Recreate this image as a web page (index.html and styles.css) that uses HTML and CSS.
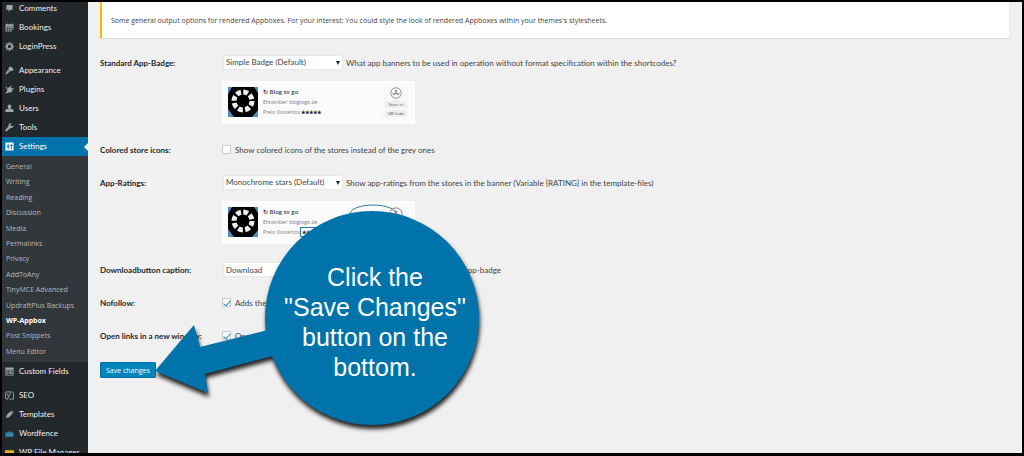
FILE: index.html
```html
<!DOCTYPE html>
<html lang="en">
    <head>
        <meta charset="UTF-8" />
        <meta name="viewport" content="width=device-width, initial-scale=1.0" />
        <title>WP-Appbox Settings</title>
        <link rel="stylesheet" href="styles.css">
    </head>
    <body>
        <div class="frame">
            <nav class="sidebar">
                <ul class="menu">
                    <li><a href="#"><svg class="icon" viewBox="0 0 20 20"><path d="M3 2h14v11h-5l-4 5v-5H3z"/></svg>Comments</a></li>
                    <li><a href="#"><svg class="icon" viewBox="0 0 20 20"><path d="M1 3h4V1h2v2h6V1h2v2h4v4H1zM1 8h4v3H1zM6 8h4v3H6zM11 8h4v3h-4zM16 8h3v3h-3zM1 12h4v3H1zM6 12h4v3H6zM11 12h4v3h-4zM16 12h3v3h-3zM1 16h4v3H1zM6 16h4v3H6zM11 16h4v3h-4z"/></svg>Bookings</a></li>
                    <li><a href="#"><svg class="icon" viewBox="0 0 20 20"><circle cx="10" cy="10" r="5.500" fill="none" stroke="currentColor" stroke-width="3.500"/><path d="M8.500 0h3v4h-3zM8.500 16h3v4h-3zM0 8.500h4v3H0zM16 8.500h4v3h-4zM2 4l2-2 3 3-2 2zM13 15l2-2 3 3-2 2zM16 2l2 2-3 3-2-2zM5 13l2 2-3 3-2-2z"/></svg>LoginPress</a></li>
                    <li class="group"><a href="#"><svg class="icon" viewBox="0 0 20 20"><path d="M9 3l4-2 6 6-2 4-3-1-3 3-4-4zM6 9l4 4-7 6-2-2z"/></svg>Appearance</a></li>
                    <li><a href="#"><svg class="icon" viewBox="0 0 20 20"><path d="M11 4l3-3 1 1-2 4 2 2 4-2 1 1-4 4c1 4-3 7-7 5l-5 3-3-1 4-5c-2-4 1-9 6-8zM1 5l4-1-2 5z"/></svg>Plugins</a></li>
                    <li><a href="#"><svg class="icon" viewBox="0 0 20 20"><path d="M6 5q0-4 4-4t4 4-2 6h5l2 3v4H1v-4l2-3h5Q6 9 6 5z"/></svg>Users</a></li>
                    <li><a href="#"><svg class="icon" viewBox="0 0 20 20"><path d="M18 5l-4 2-2-2 2-4c-4-1-7 2-6 6l-7 8c-1 3 2 5 4 3l7-7c5 1 8-3 6-6z"/></svg>Tools</a></li>
                    <li class="current"><a href="#"><svg class="icon" viewBox="0 0 20 20"><path fill-rule="evenodd" d="M1 1h18v18H1zM6 4v5H4v2h2v5h2v-5h2V9H8V4zM13 4v3h-2v2h2v7h2V9h2V7h-2V4z"/></svg>Settings</a>
                        <ul class="submenu">
                            <li><a href="#">General</a></li>
                            <li><a href="#">Writing</a></li>
                            <li><a href="#">Reading</a></li>
                            <li><a href="#">Discussion</a></li>
                            <li><a href="#">Media</a></li>
                            <li><a href="#">Permalinks</a></li>
                            <li><a href="#">Privacy</a></li>
                            <li><a href="#">AddToAny</a></li>
                            <li><a href="#">TinyMCE Advanced</a></li>
                            <li><a href="#">UpdraftPlus Backups</a></li>
                            <li><a class="active" href="#">WP-Appbox</a></li>
                            <li><a href="#">Post Snippets</a></li>
                            <li><a href="#">Menu Editor</a></li>
                        </ul>
                    </li>
                    <li><a href="#"><svg class="icon" viewBox="0 0 20 20"><path fill-rule="evenodd" d="M1 1h18v18H1zM3 6v11h14V6zM4 7h3v2H4zM8 7h8v2H8zM4 10h3v2H4zM8 10h8v2H8zM4 13h3v2H4zM8 13h8v2H8z"/></svg>Custom Fields</a></li>
                    <li class="group"><a href="#"><svg class="icon" viewBox="0 0 20 20"><path d="M13 2H4Q1 2 1 5v10q0 3 3 3h2M16 2q3 0 3 3v13H9M5 6l3 7 6-12M8 13q-1 4-4 4" fill="none" stroke="currentColor" stroke-width="2"/></svg>SEO</a></li>
                    <li><a href="#"><svg class="icon" viewBox="0 0 20 20"><path d="M2 18l2-7 8-8 5 5-8 8zM13 2l2-1 4 4-1 2z"/></svg>Templates</a></li>
                    <li><a href="#"><svg class="icon blue" viewBox="0 0 20 20"><path d="M1 7l3 2V6l3 2 3-4 3 4 3-2v3l3-2v10H1z"/></svg>Wordfence</a></li>
                    <li><a href="#"><svg class="icon yellow" viewBox="0 0 20 20"><path d="M0 5h20v12H0z"/></svg>WP File Manager</a></li>
                </ul>
            </nav>

            <main class="content">
                <div class="notice">Some general output options for rendered Appboxes. For your interest: You could style the look of rendered Appboxes within your themes's stylesheets.</div>

                <form class="settings">
                    <div class="row">
                        <label class="title" for="badge">Standard App-Badge:</label>
                        <div>
                            <div class="field">
                                <span class="select"><select id="badge"><option>Simple Badge (Default)</option></select></span>
                                <span class="hint">What app banners to be used in operation without format specification within the shortcodes?</span>
                            </div>
                            <div class="badge">
                                <svg class="app-icon" viewBox="0 0 30 30"><path d="M0 0h30v30H0z"/><path fill="#4b8ec4" d="M0 0h4L0 7zM30 0v6l-4-6zM0 22l6 8H0zM30 23v7h-6z"/><circle cx="15" cy="14" r="9" fill="none" stroke="#eee" stroke-width="5" stroke-dasharray="4.800 2.270"/></svg>
                                <div class="app-info">
                                    <strong>↻ Blog to go</strong>
                                    <span>Entwickler: blogtogo.de</span>
                                    <span>Preis: Kostenlos <b>★★★★★</b></span>
                                </div>
                                <div class="store">
                                    <svg class="store-icon" viewBox="0 0 16 16"><circle cx="8" cy="8" r="7"/><path d="M5 11l4-7M11 11L7 4M3 9h10"/></svg>
                                    <span>Store »»</span>
                                    <span>QR-Code</span>
                                </div>
                            </div>
                        </div>
                    </div>
                    <div class="row">
                        <label class="title" for="colored">Colored store icons:</label>
                        <div class="field check">
                            <input type="checkbox" id="colored" />
                            <span class="hint">Show colored icons of the stores instead of the grey ones</span>
                        </div>
                    </div>
                    <div class="row">
                        <label class="title" for="ratings">App-Ratings:</label>
                        <div>
                            <div class="field">
                                <span class="select"><select id="ratings"><option>Monochrome stars (Default)</option></select></span>
                                <span class="hint">Show app-ratings from the stores in the banner (Variable {RATING} in the template-files)</span>
                            </div>
                            <div class="badge">
                                <svg class="app-icon" viewBox="0 0 30 30"><path d="M0 0h30v30H0z"/><path fill="#4b8ec4" d="M0 0h4L0 7zM30 0v6l-4-6zM0 22l6 8H0zM30 23v7h-6z"/><circle cx="15" cy="14" r="9" fill="none" stroke="#eee" stroke-width="5" stroke-dasharray="4.800 2.270"/></svg>
                                <div class="app-info">
                                    <strong>↻ Blog to go</strong>
                                    <span>Entwickler: blogtogo.de</span>
                                    <span>Preis: Kostenlos <b class="marked">★★★★★</b></span>
                                </div>
                                <svg class="oval" viewBox="0 0 48 20"><ellipse cx="24" cy="10" rx="23" ry="9"/></svg>
                                <div class="store">
                                    <svg class="store-icon" viewBox="0 0 16 16"><circle cx="8" cy="8" r="7"/><path d="M5 11l4-7M11 11L7 4M3 9h10"/></svg>
                                </div>
                            </div>
                        </div>
                    </div>
                    <div class="row">
                        <label class="title" for="caption">Downloadbutton caption:</label>
                        <div class="field">
                            <input type="text" id="caption" value="Download" />
                            <span class="hint end">app-badge</span>
                        </div>
                    </div>
                    <div class="row">
                        <label class="title" for="nofollow">Nofollow:</label>
                        <div class="field check">
                            <input type="checkbox" id="nofollow" checked />
                            <span class="hint">Adds the</span>
                        </div>
                    </div>
                    <div class="row">
                        <label class="title" for="window">Open links in a new window:</label>
                        <div class="field check">
                            <input type="checkbox" id="window" checked />
                            <span class="hint">Open</span>
                        </div>
                    </div>
                    <button type="button" class="save">Save changes</button>
                </form>
            </main>

            <div class="callout">
                <svg class="callout-shape" viewBox="0 0 326 216"><path d="M1 161L40 115L46 137L130 116L130 143L51 164L54 183Z"/><circle cx="218" cy="108" r="107"/></svg>
                <p>Click the<br>"Save Changes"<br>button on the<br>bottom.</p>
            </div>
        </div>
    </body>
</html>
```
FILE: styles.css
```css
* {
    box-sizing: border-box;
}

body {
    margin: 0;
    background: #000;
    font-family: Lato, "Open Sans", sans-serif;
    font-size: 8px;
    line-height: 15px;
    color: #444;
}

ul {
    list-style: none;
    margin: 0;
    padding: 0;
}

a {
    color: inherit;
    text-decoration: none;
}

.frame {
    position: relative;
    display: flex;
    height: 100vh;
    overflow: hidden;
    background: #f0f0f0;
    border: 2px solid #000;
    border-bottom-width: 3px;
}

/* admin menu */
.sidebar {
    flex: 0 0 86px;
    background: #23282d;
    color: #eee;
}

.menu {
    margin-top: -3px;
}

.menu > li > a {
    display: flex;
    align-items: center;
    gap: 5px;
    height: 19px;
    padding-left: 3px;
    white-space: nowrap;
}

.menu .group {
    margin-top: 5px;
}

.icon {
    flex: none;
    width: 9px;
    height: 9px;
    fill: currentColor;
    color: #a0a5aa;
}

.current > a {
    position: relative;
    background: #0073aa;
    color: #fff;
}

.current > a::after {
    content: "";
    position: absolute;
    right: 0;
    border: 4px solid transparent;
    border-right-color: #f0f0f0;
}

.current .icon {
    color: #fff;
}

.icon.blue {
    color: #2f86ad;
}

.icon.yellow {
    color: #e5b021;
}

.submenu {
    display: flex;
    flex-direction: column;
    height: 206px;
    padding: 3px 0 3px 4px;
    background: #32373c;
    color: #b4b9be;
    font-family: "Open Sans", sans-serif;
    font-size: 7px;
}

.submenu li {
    flex: 1;
}

.submenu .active {
    color: #fff;
    font-weight: 700;
}

/* settings page */
.content {
    flex: 1;
    padding: 0 13px 0 12px;
}

.notice {
    padding: 11px 9px 10px;
    border-left: 2px solid #ffb900;
    background: #fff;
    box-shadow: 0 1px 1px #ddd;
    font-family: "Open Sans", sans-serif;
    font-size: 7px;
}

.settings {
    padding-top: 8px;
}

.row {
    display: grid;
    grid-template-columns: 122px 1fr;
    padding: 9px 0;
}

.title {
    padding-top: 1px;
    margin-bottom: -1px;
    color: #23282d;
    font-weight: 700;
}

.field {
    display: flex;
    align-items: center;
    gap: 3px;
    height: 15px;
    padding-left: 1px;
}

.check {
    gap: 4px;
    padding-left: 0;
}

.hint {
    padding-top: 2px;
}

.hint.end {
    width: 155px;
    text-align: right;
}

.select {
    position: relative;
    display: flex;
}

.select::after {
    content: "";
    position: absolute;
    top: 6px;
    right: 3px;
    border: 2px solid transparent;
    border-top: 4px solid #222;
    border-bottom: 0;
}

select,
input[type="text"] {
    width: 120px;
    height: 15px;
    margin: 0;
    padding: 0 2px;
    appearance: none;
    border: 1px solid #e8e8e8;
    border-radius: 0;
    background: #fff;
    color: #444;
    font: inherit;
    line-height: 13px;
}

input[type="checkbox"] {
    display: flex;
    justify-content: center;
    width: 9px;
    height: 9px;
    margin: 0;
    appearance: none;
    border: 1px solid #ccc;
    background: #fff;
}

input[type="checkbox"]:checked::before {
    content: "";
    width: 3px;
    height: 6px;
    border: solid #1e8cbe;
    border-width: 0 1px 1px 0;
    transform: rotate(40deg);
}

.badge {
    position: relative;
    display: flex;
    width: 193px;
    height: 43px;
    margin-top: 11px;
    padding: 5px 5px 6px 5px;
    border: 1px solid #fff;
    background: #fbfbfb;
    font-family: "Open Sans", sans-serif;
    font-size: 5px;
    line-height: 10px;
}

.app-icon {
    width: 30px;
    height: 30px;
}

.app-info {
    display: flex;
    flex: 1;
    flex-direction: column;
    margin-left: 5px;
    color: #777;
}

.app-info strong {
    color: #444;
    font-size: 6px;
    font-weight: 600;
}

.app-info b {
    color: #222;
}

.app-info .marked {
    padding: 1px;
    outline: 1px solid #2a7a9f;
}

.store {
    display: flex;
    flex-direction: column;
    align-items: center;
    gap: 2px;
    width: 26px;
    background: #f8f8f8;
    font-size: 4px;
    line-height: 7px;
}

.store span {
    width: 22px;
    background: #efefef;
    text-align: center;
}

.store-icon {
    width: 16px;
    height: 14px;
    fill: none;
    stroke: #777;
}

.oval {
    position: absolute;
    top: 2px;
    left: 126px;
    width: 48px;
    height: 20px;
    fill: none;
    stroke: #2a7a9f;
}

.save {
    display: block;
    height: 16px;
    margin-top: 10px;
    padding: 0 5px;
    border: 1px solid #0073aa;
    border-radius: 1px;
    background: #0085ba;
    color: #fff;
    font: 7px/13px "Open Sans", sans-serif;
}

/* hint bubble over the page */
.callout {
    position: absolute;
    top: 208px;
    left: 152px;
    width: 326px;
    height: 216px;
}

.callout-shape {
    position: absolute;
    overflow: visible;
    fill: #0073aa;
    filter: drop-shadow(1px 4px 2px #222);
}

.callout p {
    position: relative;
    margin: 0;
    padding: 52px 0 0 116px;
    color: #fff;
    font: 25px/30px "Liberation Sans", Arial, sans-serif;
    text-align: center;
}
```
